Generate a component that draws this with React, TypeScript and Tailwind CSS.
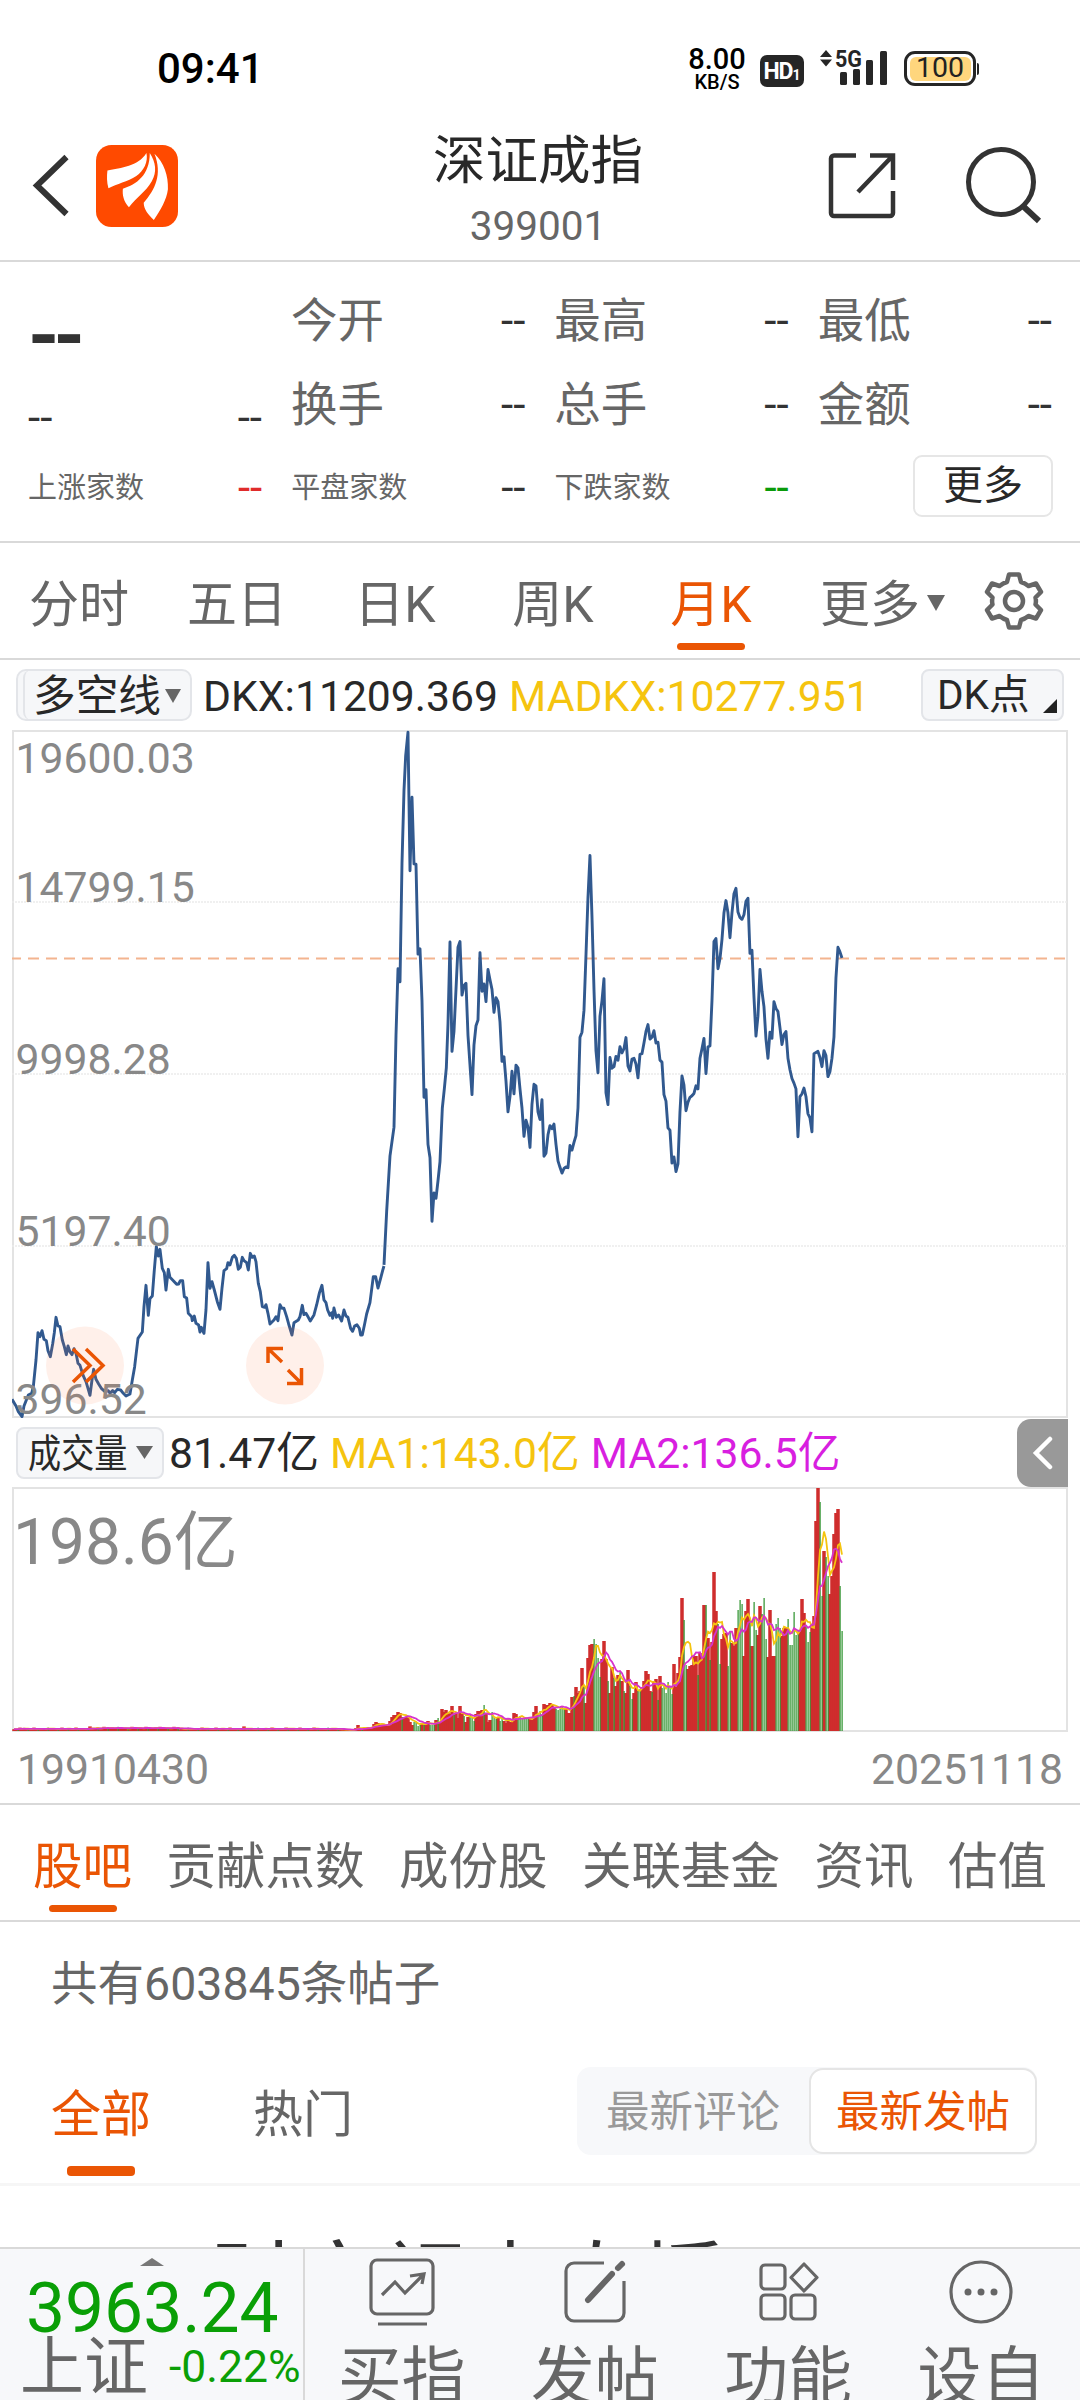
import React from 'react';

const quotes = [
  { label: '今开', value: '--' },
  { label: '最高', value: '--' },
  { label: '最低', value: '--' },
  { label: '换手', value: '--' },
  { label: '总手', value: '--' },
  { label: '金额', value: '--' },
];

const counts = [
  { label: '上涨家数', value: '--', color: 'text-[#e02b2b]' },
  { label: '平盘家数', value: '--', color: 'text-[#333333]' },
  { label: '下跌家数', value: '--', color: 'text-[#0a9b0a]' },
];

const axisLabels = [
  { text: '19600.03', y: 43 },
  { text: '14799.15', y: 172 },
  { text: '9998.28', y: 344 },
  { text: '5197.40', y: 515.5 },
  { text: '396.52', y: 684 },
];

// index close 1991 - 2008, then 2008 - 2025, each in its own sampling grid
const earlyLine =
  '36,538 48,558 55,575 66,590 72,558 85,525 95,520 100,500 108,420 114,338 120,350 126,332 132,358 139,362 144,392 151,410 158,372 163,338 168,292 174,318 180,320 187,360 193,380 199,404 204,378 210,396 216,404 222,386 228,400 234,430 240,436 250,468 258,485 264,505 270,526 276,480 281,448 288,478 296,492 304,505 315,515 325,512 330,520 338,512 344,518 352,508 362,510 370,520 378,528 390,522 397,480 404,440 414,355 427,336 432,260 438,196 445,286 450,236 457,228 463,150 469,80 475,108 480,88 487,145 493,158 498,210 505,148 510,172 520,182 530,193 536,192 541,182 548,182 553,230 560,234 565,280 575,290 577,302 583,288 588,310 596,315 600,336 604,322 612,340 618,270 624,128 630,205 636,185 643,210 652,245 660,268 666,205 672,152 680,146 684,128 690,135 697,112 703,106 709,115 715,148 721,142 727,112 732,122 740,128 745,150 751,100 757,112 763,108 768,125 775,190 781,215 787,260 794,262 798,254 804,280 810,312 822,300 828,290 834,302 840,254 846,265 852,265 860,290 866,312 876,345 882,308 895,300 900,290 907,256 912,284 918,280 925,292 931,303 942,285 950,255 958,220 966,196 972,240 978,248 983,270 990,286 995,278 998,295 1002,264 1009,292 1016,285 1025,303 1032,270 1038,288 1044,292 1052,325 1058,334 1064,318 1071,314 1078,325 1082,345 1087,345 1094,312 1100,282 1110,248 1120,170 1127,170 1134,204 1142,175 1148,152 1152,138';
const lateLine =
  '42,1450 50,1310 60,1165 72,1090 78,850 84,676 90,710 96,400 102,210 107,120 114,58 117,240 120,420 126,228 132,402 138,403 144,638 150,624 156,760 162,1012 168,992 174,1135 180,1170 186,1336 192,1262 198,1276 204,1230 210,1180 217,1040 223,990 229,935 234,820 240,606 246,892 252,840 258,730 264,620 270,605 276,745 282,720 288,714 294,850 306,1005 312,875 318,825 324,810 330,634 336,735 342,716 348,762 354,678 360,705 366,730 372,790 378,752 384,762 390,815 396,918 402,906 408,970 414,1050 420,1010 426,944 432,1003 438,928 444,935 450,990 456,1040 462,1114 468,1072 474,1090 480,1143 486,1030 492,978 498,982 504,1050 510,1070 516,1018 522,1166 528,1158 534,1110 540,1086 546,1094 552,1082 558,1135 564,1178 570,1195 576,1210 582,1198 588,1194 594,1196 600,1138 606,1150 612,1130 618,1112 624,1040 630,855 636,842 642,785 648,640 654,490 660,380 666,540 672,730 678,890 684,948 690,800 696,760 702,702 708,1000 714,1031 720,908 726,936 732,932 738,905 744,915 750,880 756,896 762,885 768,856 774,930 780,943 786,912 792,910 798,925 804,961 810,900 816,898 822,870 828,840 834,822 840,860 846,855 852,838 858,870 864,868 870,915 876,920 882,1005 888,1022 894,1092 900,1098 906,1184 912,1168 918,1206 924,1186 930,1050 936,956 942,980 948,1047 954,1025 960,1012 966,1008 972,1002 978,982 984,990 990,910 996,885 1002,858 1008,950 1014,880 1020,878 1026,760 1032,605 1038,597 1044,676 1050,650 1056,600 1062,530 1068,498 1074,530 1080,595 1086,530 1092,480 1098,466 1104,528 1110,542 1116,547 1122,535 1128,500 1134,492 1140,636 1146,628 1152,750 1158,852 1164,800 1170,678 1176,735 1182,775 1188,860 1194,910 1200,842 1206,858 1212,762 1218,780 1224,788 1230,830 1236,874 1242,848 1248,840 1254,910 1260,940 1266,963 1272,975 1278,990 1284,1115 1290,1010 1296,1003 1302,988 1308,1010 1314,1055 1320,1066 1326,1102 1332,898 1338,895 1344,892 1350,908 1356,932 1362,890 1368,903 1374,958 1380,945 1386,910 1392,855 1398,700 1404,620 1410,632 1416,648';

// monthly volume as bar height, negative = falling month
const quietMonths = Array.from({ length: 164 }, (_, i) => {
  const h = i > 38 && i < 82 ? 2.6 : 1.8;
  const size = h + (i % 7 === 3 ? 1.6 : 0) + (i % 11 === 5 ? 1.2 : 0);
  return i % 5 === 2 ? -size : size;
});
const activeMonths = [
  1.5, 1, 1, 1.5, 1, 1, 1, 3, 6, 3, -1, 3, 3, 4, 4, 4, 7, 9, 8, 6, 6, 5, 5, 7, 10, 14, 16, 16, 19, 18, -14, 14, 14, 13,
  9, 6, -9, -9, -5, -6, 8, -6, 9, 10, -6, -6, -6, 11, -13, 9, 22, 19, 21, 18, 17, 25, -16, 18, 13, 25, 17, -15, 9, 14,
  -17, -14, -10, 17, 20, 20, 21, -26, 18, 9, 11, -19, -14, -12, 13, -10, -14, 10, 8, 12, 9, 9, 18, 17, -12, -15, -13,
  -12, -12, -13, 12, 11, 19, 25, -17, -20, -17, 27, 26, 26, 28, 26, 24, -22, -21, -22, -24, -22, 23, 18, 18, 34, -35,
  44, 38, 40, 63, -45, 28, 73, 86, 87, -92, -87, -73, -54, 72, 90, 72, -50, 38, 64, -53, 45, 56, -60, 50, -40, 38, 61,
  -45, -32, 38, 49, -40, -42,
  44, 50, 60, 57, 40, -39, 50, 52, -31, 55, -43, -45, -38, -49, -43, -37, 67, 44, 58, 74, 133, -111, -66, 62, 65, 66,
  75, 75, -56, 78, 74, 126, -126, 93, -71, 89, 159, 120, -107, -67, 92, 97, 98, -65, -100, 88, 85, 103, -121, -131,
  -127, 75, 120, 132, -112, 85, -129, -101, 96, 125, -117, -133, -92, 74, 121, 75, 75, -107, -113, -103, 95, 103, 103,
  -112, -86, -86, -119, -96, -100, 100, 132, 118, -106, -89, -99, 107, 115, 210, 243, -229, -135, 180, -174, -155, 137,
  155, 197, 218, 222, -145, -100,
];
const volumes = [...quietMonths, ...activeMonths];
const VOLUME_H = 243;
const volumeX = (i: number) => 830 - (volumes.length - 1 - i) * 2;

const movingAverage = (span: number) =>
  volumes
    .map((_, i) => {
      const part = volumes.slice(Math.max(0, i - span + 1), i + 1).map(Math.abs);
      const avg = part.reduce((a, b) => a + b, 0) / part.length;
      return `${volumeX(i)},${(VOLUME_H - avg).toFixed(1)}`;
    })
    .join(' ');

const StatusBar = () => (
  <div className="flex h-[120px] items-start pt-[47px] pl-[157px] pr-[101px] text-black">
    <span className="text-[42px] leading-[44px] font-medium">09:41</span>
    <div className="ml-auto flex items-start">
      <div className="flex w-[60px] flex-col items-center font-medium">
        <span className="text-[29px] leading-[25px]">8.00</span>
        <span className="text-[20px] leading-[20px]">KB/S</span>
      </div>
      <div className="mt-[8px] ml-[13px] flex h-[32px] w-[44px] items-center justify-center rounded-[7px] bg-[#262626] font-bold text-white">
        <span className="text-[23px] leading-none tracking-[-1px]">HD</span>
        <span className="mt-[7px] text-[14px] leading-none">1</span>
      </div>
      <svg className="ml-[16px] h-[40px] w-[68px]" viewBox="0 0 68 40" fill="#262626">
        <path d="M0 10 6 3l6 7zM0 12.500h12l-6 7z" />
        <text x="15" y="20" className="text-[24px] font-bold" textLength="27" lengthAdjust="spacingAndGlyphs">
          5G
        </text>
        <rect x="20" y="25" width="7" height="13" rx="1.500" />
        <rect x="33" y="22" width="7" height="16" rx="1.500" />
        <rect x="46" y="13" width="7" height="25" rx="1.500" />
        <rect x="60" y="4" width="7" height="34" rx="1.500" />
      </svg>
      <div className="mt-[4px] ml-[16px] flex items-center">
        <div className="h-[35px] w-[72px] rounded-[11px] border-3 border-[#262626] p-[2.500px]">
          <div className="flex h-full items-center justify-center rounded-[6px] bg-[#ffd67d] text-[28.500px] leading-none text-[#222222]">
            100
          </div>
        </div>
        <div className="ml-[1px] h-[12px] w-[2px] rounded-r bg-[#262626]" />
      </div>
    </div>
  </div>
);

const Header = () => (
  <header className="flex h-[142px] items-start border-b-2 border-[#d9d9d9] pl-[32px] pr-[37px]">
    <svg className="mt-[33px] h-[66px] w-[40px]" viewBox="0 0 40 66" fill="none" stroke="#333333" strokeWidth="6">
      <path d="M34.500 4 5 32.500 34.500 61" />
    </svg>
    <svg className="mt-[25px] ml-[24px] h-[82px] w-[82px]" viewBox="30 28 244 244">
      <rect x="30" y="28" width="244" height="244" rx="46" fill="#ff4a00" />
      <g fill="#ffffff">
        <path d="M64 104C105 96 155 92 180 52 186 78 172 106 150 120 124 138 92 142 67 157 62 140 62 120 64 104Z" />
        <path d="M190 52C208 80 212 108 196 136 178 168 150 184 128 213 112 196 108 176 110 158 150 146 190 118 190 52Z" />
        <path d="M204 54C232 80 246 120 244 160 240 192 222 222 202 251 186 236 172 220 172 200 206 160 228 116 204 54Z" />
      </g>
    </svg>
    <div className="flex flex-1 flex-col items-center pl-[70px]">
      <h1 className="mt-[11px] text-[52.500px] leading-[60px] text-[#282828]">深证成指</h1>
      <span className="mt-[12px] text-[40.500px] leading-[46px] text-[#666666]">399001</span>
    </div>
    <svg className="mt-[31px] h-[70px] w-[70px]" viewBox="0 0 70 70" fill="none" stroke="#333333" strokeWidth="4.500">
      <path d="M28 4.500H6a3 3 0 0 0-3 3V62a3 3 0 0 0 3 3h56a3 3 0 0 0 3-3V40" />
      <path d="M42 4.500h23V29M65 4.500 30 41" />
    </svg>
    <svg className="mt-[25px] ml-[65px] h-[80px] w-[80px]" viewBox="0 0 80 80" fill="none" stroke="#333333" strokeWidth="5">
      <circle cx="38" cy="37" r="32.500" />
      <path d="M61 62 76 76" strokeWidth="6" />
    </svg>
  </header>
);

const QuotePanel = () => (
  <section className="h-[281px] border-b-2 border-[#d9d9d9] px-[28px] pt-[17px]">
    <div className="flex gap-x-[29px]">
      <div className="w-[234px] text-[#333333]">
        <div className="h-[84px] pt-[20px] text-[80px] leading-[74px] font-bold tracking-[-6px]">--</div>
        <div className="flex h-[84px] justify-between pt-[33px] text-[44px] leading-[44px]">
          <span>--</span>
          <span>--</span>
        </div>
      </div>
      <div className="grid flex-1 grid-cols-3 gap-x-[29px]">
        {quotes.map((q) => (
          <div key={q.label} className="flex h-[84px] items-center justify-between">
            <span className="text-[46.500px] leading-[50px] text-[#666666]">{q.label}</span>
            <span className="text-[44px] leading-[50px] text-[#333333]">{q.value}</span>
          </div>
        ))}
      </div>
    </div>
    <div className="grid grid-cols-4 gap-x-[29px]">
      {counts.map((c) => (
        <div key={c.label} className="flex h-[82px] items-center justify-between">
          <span className="text-[29px] leading-[40px] text-[#666666]">{c.label}</span>
          <span className={`text-[44px] leading-[50px] ${c.color}`}>{c.value}</span>
        </div>
      ))}
      <button className="mt-[8px] -mr-px ml-auto flex h-[62px] w-[140px] items-center justify-center rounded-[9px] border-2 border-[#e6e6e6] text-[40px] leading-none text-[#282828]">
        更多
      </button>
    </div>
  </section>
);

const PeriodTabs = () => (
  <nav className="flex h-[117px] items-start border-b-2 border-[#d9d9d9] pr-[36px] text-[50px] leading-[56px] text-[#666666]">
    <div className="flex flex-1 pt-[34px] text-center">
      <span className="w-[158px]">分时</span>
      <span className="w-[158px]">五日</span>
      <span className="w-[158px]">日K</span>
      <span className="w-[158px]">周K</span>
      <div className="flex w-[158px] flex-col items-center text-[#ea5504]">
        <span>月K</span>
        <span className="mt-[10px] h-[7px] w-[68px] rounded-full bg-[#ea5504]" />
      </div>
      <div className="flex pl-[30px]">
        <span>更多</span>
        <svg className="mt-[18px] ml-[7px] h-[16px] w-[18px]" viewBox="0 0 18 16">
          <path d="M0 0h18L9 16z" fill="#666666" />
        </svg>
      </div>
    </div>
    <svg
      className="mt-[28px] h-[60px] w-[60px]"
      viewBox="0 0 60 60"
      fill="none"
      stroke="#666666"
      strokeWidth="4.500"
      strokeLinejoin="round"
    >
      <path d="M25 3.500h10l2 7.500c3 .8 5 2 7.500 4l7.500-2.500 5 8.500-5.500 5.500c.6 2.500.6 4.500 0 7l5.500 5.500-5 8.500-7.500-2.500c-2.500 2-4.500 3.200-7.500 4L35 56.500H25L23 49c-3-.8-5-2-7.500-4L8 47.500 3 39l5.500-5.500c-.6-2.500-.6-4.500 0-7L3 21l5-8.500 7.500 2.500c2.500-2 4.500-3.200 7.500-4z" />
      <circle cx="30" cy="30" r="9" />
    </svg>
  </nav>
);

const IndicatorBar = () => (
  <div className="flex h-[70px] items-center pl-[16px] pr-[16px] text-[42.700px] leading-[52px]">
    <div className="flex h-[52px] w-[176px] items-center rounded-[10px] border-2 border-[#e3e5e9] bg-[#f6f7f9] pl-[5px]">
      <div className="-my-px flex h-[50px] flex-1 items-center rounded-[8px] border-l-2 border-[#e3e5e9] pt-[2px] pl-[8px] text-[#282828]">
        多空线
        <svg className="ml-[4px] h-[14px] w-[16px]" viewBox="0 0 16 14">
          <path d="M0 0h16L8 14z" fill="#666666" />
        </svg>
      </div>
    </div>
    <span className="ml-[11px] pt-[2px] text-[#282828]">DKX:11209.369</span>
    <span className="ml-[11px] pt-[2px] text-[#f5c40f]">MADKX:10277.951</span>
    <div className="ml-auto flex h-[52px] w-[143px] items-center rounded-[8px] border-2 border-[#e3e5e9] bg-[#f6f7f9] pl-[14px] text-[40.500px] text-[#282828]">
      DK点
      <svg className="mt-[22px] ml-auto mr-[5px] h-[14px] w-[14px]" viewBox="0 0 14 14">
        <path d="M14 0v14H0z" fill="#222222" />
      </svg>
    </div>
  </div>
);

const PriceChart = () => (
  <div className="relative ml-[12px] h-[688px] w-[1056px] border-2 border-[#e3e3e3]">
    <svg className="-mt-[2px] -ml-[2px] h-[688px] w-[1056px]" viewBox="0 0 1056 688">
      <g stroke="#ececec" strokeWidth="1.500" strokeDasharray="2 1">
        <path d="M0 172H1056M0 344H1056M0 516H1056" />
      </g>
      <path d="M-2 228.500H1056" stroke="#f3b48f" strokeWidth="2" strokeDasharray="11 7" />
      <g fill="none" stroke="#31598f" strokeWidth="2.900" strokeLinejoin="round">
        <polyline
          points={earlyLine}
          transform="translate(-12 490) scale(0.3333)"
          vectorEffect="non-scaling-stroke"
        />
        <polyline
          points={lateLine}
          transform="translate(358 -20) scale(0.3333 0.3827)"
          vectorEffect="non-scaling-stroke"
        />
      </g>
      <g className="text-[42.700px]" fill="#888888">
        {axisLabels.map((l) => (
          <text key={l.text} x="3.500" y={l.y}>
            {l.text}
          </text>
        ))}
      </g>
      <circle cx="73" cy="635.500" r="39" fill="#fd7a3c" fillOpacity="0.110" />
      <circle cx="273" cy="635.500" r="39" fill="#fd7a3c" fillOpacity="0.110" />
      <g fill="none" stroke="#ea5504" strokeWidth="3.500">
        <path d="M61 619 78 635.500 61 652M74 619 91 635.500 74 652" />
        <path d="M256 633V618.500H271M256 618.500 270 632M289.500 638V653.500H275M289.500 653.500 276 640" />
      </g>
    </svg>
  </div>
);

const VolumeBar = () => (
  <div className="flex h-[70px] items-center pl-[16px] pr-[12px] text-[42.700px] leading-[52px] whitespace-nowrap">
    <div className="flex h-[52px] w-[148px] items-center rounded-[8px] border-2 border-[#e3e5e9] bg-[#f6f7f9] pl-[10px] text-[#282828]">
      <span className="w-[101px]">
        <span className="inline-block origin-left scale-x-[0.850] text-[39px]">成交量</span>
      </span>
      <svg className="ml-[7px] h-[13px] w-[17px] shrink-0" viewBox="0 0 17 13">
        <path d="M0 0h17L8.500 13z" fill="#666666" />
      </svg>
    </div>
    <span className="ml-[5px] text-[#282828]">81.47亿</span>
    <span className="ml-[11px] text-[#f5c40f]">MA1:143.0亿</span>
    <span className="ml-[11px] text-[#d81fe0]">MA2:136.5亿</span>
    <button className="ml-auto flex h-[68px] w-[51px] items-center justify-center rounded-l-[14px] bg-[#999999]">
      <svg className="h-[34px] w-[22px]" viewBox="0 0 22 34" fill="none" stroke="#ffffff" strokeWidth="4.500" strokeLinecap="round">
        <path d="M18 3 4 17 18 31" />
      </svg>
    </button>
  </div>
);

const VolumeChart = () => (
  <div className="ml-[12px] h-[245px] w-[1056px] border-2 border-[#e3e3e3]">
    <svg className="-mt-px -ml-[2px] h-[243px] w-[1056px]" viewBox="0 0 1056 243">
      {volumes.map((v, i) =>
        v > 0 ? <rect key={i} x={volumeX(i) - 1.75} y={VOLUME_H - v} width="3.500" height={v} fill="#cf2d2d" /> : null,
      )}
      {volumes.map((v, i) =>
        v < 0 ? (
          <rect key={i} x={volumeX(i) - 0.5} y={VOLUME_H + v} width="1.200" height={-v} fill="#1f8a1f" fillOpacity="0.950" />
        ) : null,
      )}
      <polyline points={movingAverage(5)} fill="none" stroke="#f5c40f" strokeWidth="1.800" />
      <polyline points={movingAverage(10)} fill="none" stroke="#d633cc" strokeWidth="1.800" />
      <text x="1" y="76" fill="#888888" className="text-[64px]">
        198.6亿
      </text>
    </svg>
  </div>
);

const sections = ['股吧', '贡献点数', '成份股', '关联基金', '资讯', '估值'];

const SectionTabs = () => (
  <nav className="flex h-[119px] justify-between border-y-2 border-[#d9d9d9] px-[33px] pt-[34px] text-[49.500px] leading-[56px] text-[#666666]">
    {sections.map((s, i) =>
      i === 0 ? (
        <div key={s} className="flex flex-col items-center text-[#ea5504]">
          <span>{s}</span>
          <span className="mt-[10px] h-[7px] w-[68px] rounded-full bg-[#ea5504]" />
        </div>
      ) : (
        <span key={s}>{s}</span>
      ),
    )}
  </nav>
);

const Posts = () => (
  <section className="h-[325px] overflow-hidden">
    <p className="h-[124px] pt-[34px] pl-[51px] text-[46.500px] leading-[56px] text-[#666666]">共有603845条帖子</p>
    <div className="flex h-[140px] items-start border-b-3 border-[#f6f6f6] pt-[21px] pl-[51px] pr-[43px] text-[50px] leading-[56px]">
      <div className="flex flex-col items-center pt-[20px] text-[#ea5504]">
        <span>全部</span>
        <span className="mt-[23px] h-[10px] w-[68px] rounded-[4px] bg-[#ea5504]" />
      </div>
      <span className="ml-[102px] pt-[20px] text-[#666666]">热门</span>
      <div className="ml-auto flex h-[88px] w-[460px] items-center rounded-[14px] bg-[#f7f8fa] text-[43.500px] leading-[56px]">
        <span className="flex-1 pt-[3px] text-center text-[#999999]">最新评论</span>
        <span className="flex h-[86px] w-[228px] items-center justify-center rounded-[14px] border-2 border-[#e5e5e5] bg-white pt-[3px] text-[#ea5504]">
          最新发帖
        </span>
      </div>
    </div>
    <p className="mt-[43px] pl-[210px] text-[86px] leading-[110px] text-[#333333]">财富视点直播</p>
  </section>
);

const actions = [
  {
    label: '买指',
    icon: (
      <>
        <rect x="4" y="3" width="62" height="54" rx="6" />
        <path d="M15 38 28 25l10 11 18-18M43 19l14-2-2 10M11 67H60" />
      </>
    ),
  },
  {
    label: '发帖',
    icon: (
      <>
        <path d="M44 6H14a8 8 0 0 0-8 8v42a8 8 0 0 0 8 8h42a8 8 0 0 0 8-8V24" />
        <path d="M28 43 52 17" strokeWidth="6" strokeLinecap="round" />
        <path d="M58 11 62 7" strokeWidth="6" strokeLinecap="round" />
      </>
    ),
  },
  {
    label: '功能',
    icon: (
      <>
        <rect x="8" y="8" width="24" height="24" rx="4" />
        <rect x="8" y="38" width="24" height="24" rx="4" />
        <rect x="38" y="38" width="24" height="24" rx="4" />
        <path d="M51 7 64 20.500 51 34 38 20.500z" strokeLinejoin="round" />
      </>
    ),
  },
  {
    label: '设自',
    icon: (
      <>
        <circle cx="35" cy="35" r="30" />
        <g fill="#666666" stroke="none">
          <circle cx="22" cy="35" r="3.500" />
          <circle cx="35" cy="35" r="3.500" />
          <circle cx="48" cy="35" r="3.500" />
        </g>
      </>
    ),
  },
];

const BottomBar = () => (
  <footer className="flex h-[153px] overflow-hidden border-t-2 border-[#d9d9d9] bg-[#f7f8fa] pr-[2px]">
    <div className="w-[305px] shrink-0 border-r-2 border-[#d9d9d9]">
      <svg className="mt-[9px] ml-[140px] h-[8px] w-[24px]" viewBox="0 0 24 8">
        <path d="M12 0 24 8H0z" fill="#777777" />
      </svg>
      <div className="mt-[8px] pl-[26px] text-[69.500px] leading-[70px] text-[#0a9f06]">3963.24</div>
      <div className="flex pl-[20px] whitespace-nowrap">
        <span className="-mt-[11px] text-[64px] leading-[70px] text-[#666666]">上证</span>
        <span className="-mt-[2px] ml-[21px] text-[44.500px] leading-[50px] text-[#0a9f06]">-0.22%</span>
      </div>
    </div>
    {actions.map((a) => (
      <div key={a.label} className="flex flex-1 flex-col items-center pt-[8px]">
        <svg className="h-[70px] w-[70px] shrink-0" viewBox="0 0 70 70" fill="none" stroke="#666666" strokeWidth="3.200">
          {a.icon}
        </svg>
        <span className="mt-[13px] text-[64px] leading-[76px] text-[#666666]">{a.label}</span>
      </div>
    ))}
  </footer>
);

export default function App() {
  return (
    <div className="flex h-[2400px] w-[1080px] flex-col overflow-hidden bg-white font-['Roboto','Noto_Sans_CJK_SC',sans-serif] font-normal">
      <StatusBar />
      <Header />
      <QuotePanel />
      <PeriodTabs />
      <IndicatorBar />
      <PriceChart />
      <VolumeBar />
      <VolumeChart />
      <div className="flex h-[71px] items-center justify-between px-[17px] pt-[3px] text-[42.700px] leading-[50px] text-[#888888]">
        <span>19910430</span>
        <span>20251118</span>
      </div>
      <SectionTabs />
      <Posts />
      <BottomBar />
    </div>
  );
}
